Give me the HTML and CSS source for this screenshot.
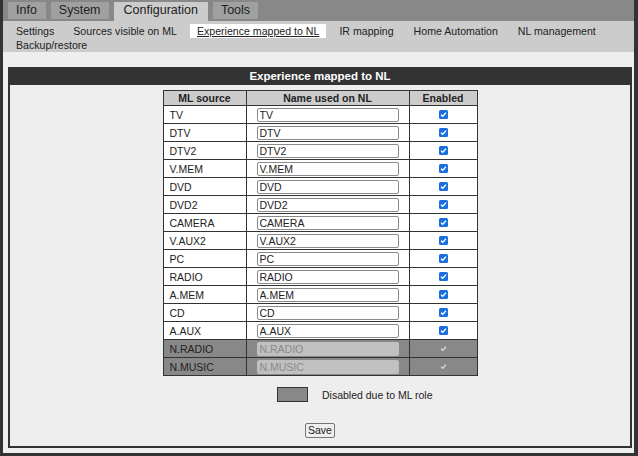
FILE: index.html
```html
<!DOCTYPE html>
<html>
<head>
<meta charset="utf-8">
<title>Experience mapped to NL</title>
<link rel="stylesheet" href="styles.css">
</head>
<body>
<div class="page">
  <nav class="tabs">
    <a class="tab">Info</a>
    <a class="tab">System</a>
    <a class="tab active">Configuration</a>
    <a class="tab">Tools</a>
  </nav>
  <nav class="subnav">
    <a class="sub">Settings</a>
    <a class="sub">Sources visible on ML</a>
    <a class="sub active">Experience mapped to NL</a>
    <a class="sub">IR mapping</a>
    <a class="sub">Home Automation</a>
    <a class="sub">NL management</a>
    <a class="sub">Backup/restore</a>
  </nav>
  <main class="content">
    <section class="panel">
      <h1 class="panel-title">Experience mapped to NL</h1>
      <table class="map">
        <thead>
          <tr><th class="c1">ML source</th><th class="c2">Name used on NL</th><th class="c3">Enabled</th></tr>
        </thead>
        <tbody>
          <tr><td>TV</td><td class="name"><input type="text" value="TV"></td><td class="chk"><svg class="cb" viewBox="0 0 9 9"><rect width="9" height="9" rx="1.5"/><path d="M2 4.7 3.7 6.3 7 2.7"/></svg></td></tr>
          <tr><td>DTV</td><td class="name"><input type="text" value="DTV"></td><td class="chk"><svg class="cb" viewBox="0 0 9 9"><rect width="9" height="9" rx="1.5"/><path d="M2 4.7 3.7 6.3 7 2.7"/></svg></td></tr>
          <tr><td>DTV2</td><td class="name"><input type="text" value="DTV2"></td><td class="chk"><svg class="cb" viewBox="0 0 9 9"><rect width="9" height="9" rx="1.5"/><path d="M2 4.7 3.7 6.3 7 2.7"/></svg></td></tr>
          <tr><td>V.MEM</td><td class="name"><input type="text" value="V.MEM"></td><td class="chk"><svg class="cb" viewBox="0 0 9 9"><rect width="9" height="9" rx="1.5"/><path d="M2 4.7 3.7 6.3 7 2.7"/></svg></td></tr>
          <tr><td>DVD</td><td class="name"><input type="text" value="DVD"></td><td class="chk"><svg class="cb" viewBox="0 0 9 9"><rect width="9" height="9" rx="1.5"/><path d="M2 4.7 3.7 6.3 7 2.7"/></svg></td></tr>
          <tr><td>DVD2</td><td class="name"><input type="text" value="DVD2"></td><td class="chk"><svg class="cb" viewBox="0 0 9 9"><rect width="9" height="9" rx="1.5"/><path d="M2 4.7 3.7 6.3 7 2.7"/></svg></td></tr>
          <tr><td>CAMERA</td><td class="name"><input type="text" value="CAMERA"></td><td class="chk"><svg class="cb" viewBox="0 0 9 9"><rect width="9" height="9" rx="1.5"/><path d="M2 4.7 3.7 6.3 7 2.7"/></svg></td></tr>
          <tr><td>V.AUX2</td><td class="name"><input type="text" value="V.AUX2"></td><td class="chk"><svg class="cb" viewBox="0 0 9 9"><rect width="9" height="9" rx="1.5"/><path d="M2 4.7 3.7 6.3 7 2.7"/></svg></td></tr>
          <tr><td>PC</td><td class="name"><input type="text" value="PC"></td><td class="chk"><svg class="cb" viewBox="0 0 9 9"><rect width="9" height="9" rx="1.5"/><path d="M2 4.7 3.7 6.3 7 2.7"/></svg></td></tr>
          <tr><td>RADIO</td><td class="name"><input type="text" value="RADIO"></td><td class="chk"><svg class="cb" viewBox="0 0 9 9"><rect width="9" height="9" rx="1.5"/><path d="M2 4.7 3.7 6.3 7 2.7"/></svg></td></tr>
          <tr><td>A.MEM</td><td class="name"><input type="text" value="A.MEM"></td><td class="chk"><svg class="cb" viewBox="0 0 9 9"><rect width="9" height="9" rx="1.5"/><path d="M2 4.7 3.7 6.3 7 2.7"/></svg></td></tr>
          <tr><td>CD</td><td class="name"><input type="text" value="CD"></td><td class="chk"><svg class="cb" viewBox="0 0 9 9"><rect width="9" height="9" rx="1.5"/><path d="M2 4.7 3.7 6.3 7 2.7"/></svg></td></tr>
          <tr><td>A.AUX</td><td class="name"><input type="text" value="A.AUX"></td><td class="chk"><svg class="cb" viewBox="0 0 9 9"><rect width="9" height="9" rx="1.5"/><path d="M2 4.7 3.7 6.3 7 2.7"/></svg></td></tr>
          <tr class="disabled"><td>N.RADIO</td><td class="name"><input type="text" value="N.RADIO" disabled></td><td class="chk"><svg class="cb off" viewBox="0 0 9 9"><path d="M2 4.7 3.7 6.3 7 2.7"/></svg></td></tr>
          <tr class="disabled"><td>N.MUSIC</td><td class="name"><input type="text" value="N.MUSIC" disabled></td><td class="chk"><svg class="cb off" viewBox="0 0 9 9"><path d="M2 4.7 3.7 6.3 7 2.7"/></svg></td></tr>
        </tbody>
      </table>
      <div class="legend">
        <span class="swatch"></span>
        <span class="legend-text">Disabled due to ML role</span>
      </div>
      <div class="actions">
        <button type="button" class="save">Save</button>
      </div>
    </section>
  </main>
</div>
</body>
</html>
```

FILE: styles.css
```css
html, body {
  margin: 0;
  padding: 0;
  height: 100%;
  background: #333333;
}

body {
  font-family: "Liberation Sans", Arial, sans-serif;
  color: #222222;
}

.page {
  box-sizing: border-box;
  height: 100vh;
  margin-left: 3px;
  margin-right: 4px;
  padding-bottom: 3px;
  display: flex;
  flex-direction: column;
}

.tabs {
  background: #888888;
  height: 21px;
  display: flex;
  align-items: flex-end;
  gap: 5px;
  padding-left: 5px;
  flex: none;
}

.tab {
  background: #a0a0a0;
  height: 17px;
  line-height: 17px;
  margin-bottom: 2px;
  padding: 0 8px;
  font-size: 12.5px;
  color: #222222;
}

.tab:first-child { padding: 0 9px 0 8px; }

.tab.active {
  background: #cccccc;
  height: 19px;
  margin-bottom: 0;
  line-height: 17px;
  padding: 0 10px;
}

.subnav {
  background: #cccccc;
  padding-top: 3px;
  display: flex;
  flex-wrap: wrap;
  flex: none;
}

.sub {
  font-size: 10.6px;
  line-height: 14px;
  height: 14px;
  padding: 0 7px;
  margin-left: 6px;
  color: #222222;
}

.sub:nth-child(2) { margin-left: 5px; }

.sub.active {
  background: #ffffff;
  text-decoration: underline;
}

.content {
  flex: 1;
  min-height: 0;
  background: #eeeeee;
  padding: 15px 2px 5px 5px;
  display: flex;
}

.panel {
  flex: 1;
  border: 2px solid #333333;
  border-top: 0;
}

.panel-title {
  margin: 0;
  background: #333333;
  color: #ffffff;
  font-size: 11.5px;
  font-weight: bold;
  height: 18px;
  line-height: 19px;
  text-align: center;
}

.map {
  border-collapse: collapse;
  margin: 5px auto 0;
  font-size: 10.5px;
  background: #ffffff;
}

.map th,
.map td {
  border: 1px solid #333333;
  height: 17px;
  padding: 0;
}

.map th {
  background: #cccccc;
  font-weight: bold;
  text-align: center;
  height: 14px;
}

.map .c1 { width: 82px; }
.map .c2 { width: 162px; }
.map .c3 { width: 67px; }

.map td:first-child {
  padding-left: 6px;
}

.map td.name {
  text-align: center;
}

.map input {
  box-sizing: border-box;
  width: 142px;
  height: 14px;
  margin: 0;
  padding: 0 2px;
  border: 1px solid #8a8a8a;
  border-radius: 2px;
  font-family: "Liberation Sans", Arial, sans-serif;
  font-size: 10.5px;
  color: #222222;
  vertical-align: middle;
  background: #ffffff;
}

.map td.chk {
  text-align: center;
  line-height: 0;
}

.cb {
  width: 9px;
  height: 9px;
  vertical-align: middle;
}

.cb rect { fill: #1a6fe0; }

.cb path {
  fill: none;
  stroke: #ffffff;
  stroke-width: 1.3;
}

.cb.off path { stroke: #d8d8d8; }

.map tr.disabled td {
  background: #888888;
}

.map tr.disabled input {
  background: #c0c0c0;
  border-color: #c0c0c0;
  color: #8a8a8a;
}

.legend {
  display: flex;
  align-items: center;
  margin: 11px 0 0 267px;
  font-size: 10.5px;
}

.swatch {
  box-sizing: border-box;
  width: 31px;
  height: 15px;
  background: #888888;
  border: 1px solid #333333;
  margin-right: 14px;
}

.actions {
  margin-top: 18px;
  text-align: center;
}

.save {
  font-family: "Liberation Sans", Arial, sans-serif;
  font-size: 10.5px;
  color: #222222;
  padding: 0 2px;
  height: 15px;
  line-height: 12px;
  background: #efefef;
  border: 1px solid #767676;
  border-radius: 2px;
}
```
